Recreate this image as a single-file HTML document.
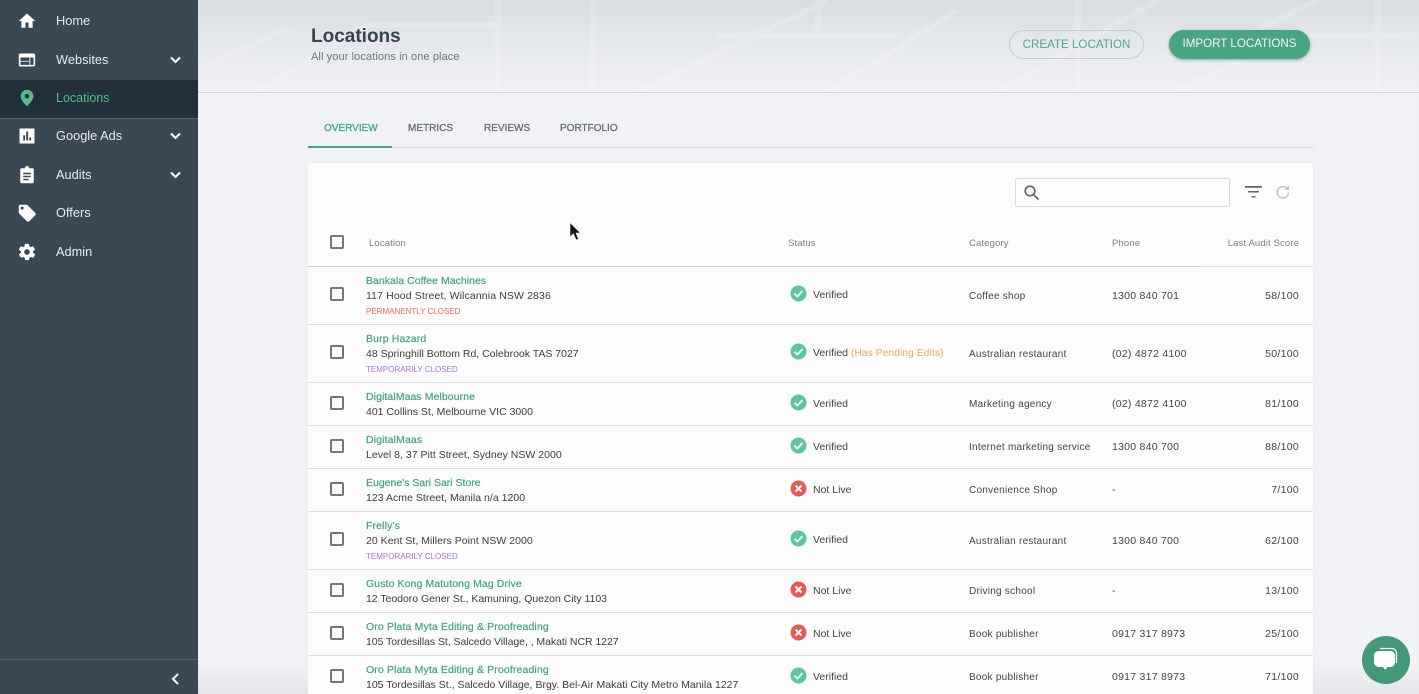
<!DOCTYPE html>
<html><head><meta charset="utf-8"><title>Locations</title>
<style>
*{box-sizing:border-box}
html,body{margin:0;padding:0;width:1419px;height:694px;overflow:hidden;font-family:"Liberation Sans",sans-serif;background:#eff1f4}
.a{position:absolute;white-space:nowrap}
#side{position:absolute;left:0;top:0;width:198px;height:694px;background:#3a4856}
.nav{position:absolute;left:56px;font-size:12.8px;color:#e6e9ec;line-height:16px}
.ic{position:absolute;left:18px;width:18px;height:18px}
.chev{position:absolute;left:170px;width:11px;height:8px}
#head{position:absolute;left:198px;top:0;width:1221px;height:93px;background:linear-gradient(#d9dee3,#eff1f4);border-bottom:1px solid #ced3d8}
#card{position:absolute;left:308px;top:163px;width:1005px;height:531px;background:#fcfcfd;border-radius:3px 3px 0 0;box-shadow:0 0 2px rgba(0,0,0,.04)}
.ln{position:absolute;left:308px;width:1005px;height:1px;background:#dcdee3}
.cb{position:absolute;left:330px;width:14px;height:14px;border:2px solid #757575;border-radius:2px}
.n{position:absolute;left:366px;margin-top:1px;font-size:10.5px;color:#41a47c;line-height:13px;white-space:nowrap;letter-spacing:.13px;-webkit-text-stroke:.2px #41a47c}
.d{position:absolute;left:366px;margin-top:1px;font-size:10.5px;color:#3d3d3d;line-height:13px;white-space:nowrap;letter-spacing:0}
.t{position:absolute;left:366px;margin-top:1px;font-size:8px;line-height:10px;white-space:nowrap}
.s{position:absolute;left:813px;margin-top:1px;font-size:10.500px;color:#444;line-height:13px;white-space:nowrap}
.c{position:absolute;left:969px;margin-top:1px;font-size:10px;color:#444;line-height:13px;white-space:nowrap;letter-spacing:.25px}
.p{position:absolute;left:1112px;margin-top:1px;font-size:10.5px;color:#444;line-height:13px;white-space:nowrap;letter-spacing:.25px}
.r{position:absolute;right:120px;margin-top:1px;font-size:10.5px;color:#444;line-height:13px;white-space:nowrap;letter-spacing:.3px}
.h{position:absolute;top:237px;margin-top:1px;font-size:9.5px;color:#808080;line-height:12px;white-space:nowrap;letter-spacing:.13px}
.st{position:absolute;left:789.5px;width:17px;height:17px}
.tab{position:absolute;top:122px;margin-top:1px;font-size:10px;line-height:12px;color:#666d74;-webkit-text-stroke:.3px #666d74}
</style></head><body>
<svg class="a" style="left:198px;top:0;width:1221px;height:694px" viewBox="0 0 1221 694">
<defs><pattern id="dots" width="4" height="4" patternUnits="userSpaceOnUse"><rect x="1" y="1" width="1" height="1" fill="#fff" opacity=".6"/><rect x="3" y="3" width="1" height="1" fill="#fff" opacity=".45"/></pattern>
<linearGradient id="fade" x1="0" y1="0" x2="0" y2="1"><stop offset="0" stop-color="#e3e5e8" stop-opacity="0"/><stop offset="1" stop-color="#e3e5e8"/></linearGradient></defs>
<rect width="1221" height="694" fill="#eff1f4"/><rect y="93" width="1221" height="601" fill="url(#dots)"/>
<rect y="664" width="1221" height="30" fill="url(#fade)"/>
</svg>
<div id="head">
<svg width="1221" height="92" viewBox="0 0 1221 92" fill="none">
<g stroke="#fff" stroke-opacity=".16" stroke-width="6">
<path d="M0 70 L90 28M60 92L170 25 300 25 M300 0V92M395 0V92 M440 92 L630 0M520 35H700M630 92L760 10M800 92 960 0M620 0V35M880 0V92M980 92 1100 30 M1120 0 L1000 60M1180 0V92M1040 35H1221"/>
</g>
<rect y="28" width="1221" height="64" fill="url(#dots)" opacity=".5"/>
</svg></div>
<div id="side">
<div class="a" style="left:0;top:80px;width:198px;height:38px;background:#22303c"></div>
<div class="a" style="left:0;top:118px;width:198px;height:1px;background:#566472"></div>
<div class="a" style="left:0;top:659px;width:198px;height:1px;background:#566472"></div>
<svg class="ic" style="top:12px" viewBox="0 0 24 24" fill="#fff"><path d="M10 21v-7h4v7h5.500v-9H23L12 2 1 12h3.500v9z"/></svg>
<div class="nav" style="top:13px">Home</div>
<svg class="ic" style="top:51px" viewBox="1 1 22 22" fill="#fff"><path d="M20 4H4c-1.100 0-2 .9-2 2v12c0 1.100.9 2 2 2h16c1.100 0 2-.9 2-2V6c0-1.100-.9-2-2-2zm-5 14H4v-4h11v4zm0-5H4V9h11v4zm5 5h-4V9h4v9z"/></svg>
<div class="nav" style="top:52px">Websites</div>
<svg class="chev" style="top:56px" viewBox="0 0 11 8" fill="none" stroke="#fff" stroke-width="2"><path d="M1 1.500l4.500 4.500L10 1.500"/></svg>
<svg class="ic" style="top:89px" viewBox="0 0 24 24" fill="#53bd92"><path d="M12 1a8.500 8.500 0 0 0-8.500 8.500C3.500 15.500 12 23 12 23s8.500-7.500 8.500-13.500A8.500 8.500 0 0 0 12 1zm0 11.500a3 3 0 1 1 0-6 3 3 0 0 1 0 6z"/></svg>
<div class="nav" style="top:90px;color:#53bd92;font-size:12.500px">Locations</div>
<svg class="ic" style="top:127px" viewBox="0 0 24 24" fill="#fff"><path fill-rule="evenodd" d="M3 2h18a1 1 0 0 1 1 1v18a1 1 0 0 1-1 1H3a1 1 0 0 1-1-1V3a1 1 0 0 1 1-1zm4 9v7h2.500v-7zm4-5v12h2.500V6zm4 8v4h2.500v-4z"/></svg>
<div class="nav" style="top:128px">Google Ads</div>
<svg class="chev" style="top:132px" viewBox="0 0 11 8" fill="none" stroke="#fff" stroke-width="2"><path d="M1 1.500l4.500 4.500L10 1.500"/></svg>
<svg class="ic" style="top:166px" viewBox="0 0 24 24" fill="#fff"><path fill-rule="evenodd" d="M5 3h4a3 3 0 0 1 6 0h4a2 2 0 0 1 2 2v16a2 2 0 0 1-2 2H5a2 2 0 0 1-2-2V5a2 2 0 0 1 2-2zm2 6v2h10V9zm0 4v2h10v-2zm0 4v2h7v-2z"/></svg>
<div class="nav" style="top:167px">Audits</div>
<svg class="chev" style="top:171px" viewBox="0 0 11 8" fill="none" stroke="#fff" stroke-width="2"><path d="M1 1.500l4.500 4.500L10 1.500"/></svg>
<svg class="ic" style="top:204px" viewBox="0 0 24 24" fill="#fff"><path fill-rule="evenodd" d="M1 3.500A2.500 2.500 0 0 1 3.500 1h7.500a2.500 2.500 0 0 1 1.800.7l10 10a2.500 2.500 0 0 1 0 3.500l-7.600 7.600a2.500 2.500 0 0 1-3.500 0l-10-10A2.500 2.500 0 0 1 1 11zM5.500 7.500a2 2 0 1 0 0-4 2 2 0 0 0 0 4z"/></svg>
<div class="nav" style="top:205px">Offers</div>
<svg class="ic" style="top:243px" viewBox="1 1 22 22" fill="#fff"><path fill-rule="evenodd" d="M19.400 13a7.500 7.500 0 0 0 0-2l2.100-1.600a.5.5 0 0 0 .1-.6l-2-3.500a.5.5 0 0 0-.6-.2l-2.500 1a7.300 7.300 0 0 0-1.700-1l-.4-2.600a.5.5 0 0 0-.5-.4h-4a.5.5 0 0 0-.5.4l-.4 2.600a7.300 7.300 0 0 0-1.700 1l-2.500-1a.5.5 0 0 0-.6.2l-2 3.500a.5.5 0 0 0 .1.600L4.600 11a7.500 7.500 0 0 0 0 2l-2.100 1.600a.5.5 0 0 0-.1.600l2 3.500a.5.5 0 0 0 .6.2l2.500-1c.5.4 1.100.7 1.700 1l.4 2.600a.5.5 0 0 0 .5.4h4a.5.5 0 0 0 .5-.4l.4-2.600c.6-.3 1.200-.6 1.700-1l2.500 1a.5.5 0 0 0 .6-.2l2-3.500a.5.5 0 0 0-.1-.6zM12 15.500a3.500 3.500 0 1 1 0-7 3.500 3.500 0 0 1 0 7z"/></svg>
<div class="nav" style="top:244px">Admin</div>
<svg class="chev" style="top:673px;left:171px;width:9px;height:12px" viewBox="0 0 9 12" fill="none" stroke="#fff" stroke-width="2"><path d="M7 1L2 6l5 5"/></svg>
</div>

<div class="a" style="left:311px;top:25px;font-size:19px;font-weight:700;color:#36454f;line-height:24px">Locations</div>
<div class="a" style="left:311px;top:51px;font-size:11px;color:#6b7580;line-height:13px;letter-spacing:.1px">All your locations in one place</div>
<div class="a" style="left:1009px;top:30px;width:135px;height:29px;border:1px solid #c5cbd0;border-radius:15px;color:#4eab85;font-size:11.600px;line-height:27px;text-align:center">CREATE LOCATION</div>
<div class="a" style="left:1169px;top:30px;width:141px;height:29px;background:#48a582;border-radius:15px;color:#f1f7f5;font-size:11.600px;line-height:28px;text-align:center;box-shadow:0 1px 3px rgba(0,0,0,.3)">IMPORT LOCATIONS</div>

<div class="tab" style="left:324px;color:#41a87f;-webkit-text-stroke:.3px #41a87f">OVERVIEW</div>
<div class="tab" style="left:408px">METRICS</div>
<div class="tab" style="left:484px">REVIEWS</div>
<div class="tab" style="left:560px">PORTFOLIO</div>
<div class="a" style="left:308px;top:147px;width:1005px;height:1px;background:#d3d7db"></div>
<div class="a" style="left:308px;top:146px;width:84px;height:2px;background:#41a87f"></div>

<div id="card"></div>
<div class="a" style="left:1015px;top:178px;width:215px;height:29px;border:1px solid #dadce1;border-radius:2px;background:#fcfcfd"></div>
<svg class="a" style="left:1023px;top:184px;width:17px;height:17px" viewBox="0 0 17 17" fill="none" stroke="#666" stroke-width="1.700"><circle cx="7" cy="7" r="4.800"/><path d="M10.500 10.500L15.500 15.500"/></svg>
<svg class="a" style="left:1245px;top:186px;width:18px;height:13px" viewBox="0 0 18 13" fill="#666"><rect width="17" height="1.800" y="0"/><rect x="3" width="11" height="1.500" y="5"/><rect x="6.500" width="4" height="1.500" y="10"/></svg>
<svg class="a" style="left:1275px;top:184px;width:16px;height:16px" viewBox="0 0 16 16" fill="none" stroke="#c4c4c4" stroke-width="1.500"><path d="M13.500 8.500a5.700 5.700 0 1 1-1.700-4.300"/><path d="M14 1.500v4.500h-4.500z" fill="#c4c4c4" stroke="none"/></svg>

<div class="cb" style="top:235px"></div>
<div class="h" style="left:369px">Location</div><div class="h" style="left:788px">Status</div><div class="h" style="left:969px">Category</div><div class="h" style="left:1112px">Phone</div><div class="h" style="right:120px">Last Audit Score</div>
<div class="ln" style="top:266px;background:#cfd0d2;width:891px"></div><div class="ln" style="top:266px;left:1199px;width:114px"></div>

<svg width="0" height="0" style="position:absolute"><defs>
<symbol id="ok" viewBox="0 0 17 17"><circle cx="8.500" cy="8.500" r="8" fill="#5cc79c"/><path d="M4.500 8.800l2.800 2.800 5.200-5.600" fill="none" stroke="#fff" stroke-width="1.800"/></symbol>
<symbol id="no" viewBox="0 0 17 17"><circle cx="8.500" cy="8.500" r="8" fill="#ec5655"/><path d="M5.500 5.500l6 6M11.500 5.500l-6 6" fill="none" stroke="#fff" stroke-width="2"/></symbol>
</defs></svg>

<div class="cb" style="top:287px"></div>
<div class="n" style="top:274px;letter-spacing:.03px">Bankala Coffee Machines</div><div class="d" style="top:289px;letter-spacing:.12px">117 Hood Street, Wilcannia NSW 2836</div><div class="t" style="top:306px;color:#ee6a62">PERMANENTLY CLOSED</div>
<svg class="st" style="top:285px"><use href="#ok"/></svg><div class="s" style="top:288px">Verified</div><div class="c" style="top:289px">Coffee shop</div><div class="p" style="top:289px">1300 840 701</div><div class="r" style="top:289px">58/100</div>
<div class="ln" style="top:324px"></div>

<div class="cb" style="top:345px"></div>
<div class="n" style="top:332px">Burp Hazard</div><div class="d" style="top:347px">48 Springhill Bottom Rd, Colebrook TAS 7027</div><div class="t" style="top:364px;color:#a576df">TEMPORARILY CLOSED</div>
<svg class="st" style="top:343px"><use href="#ok"/></svg><div class="s" style="top:346px">Verified <span style="color:#f6a455;font-size:10px;letter-spacing:.2px">(Has Pending Edits)</span></div><div class="c" style="top:347px">Australian restaurant</div><div class="p" style="top:347px">(02) 4872 4100</div><div class="r" style="top:347px">50/100</div>
<div class="ln" style="top:382px"></div>

<div class="cb" style="top:396px"></div>
<div class="n" style="top:390px;letter-spacing:.08px">DigitalMaas Melbourne</div><div class="d" style="top:405px">401 Collins St, Melbourne VIC 3000</div>
<svg class="st" style="top:394px"><use href="#ok"/></svg><div class="s" style="top:397px">Verified</div><div class="c" style="top:397px">Marketing agency</div><div class="p" style="top:397px">(02) 4872 4100</div><div class="r" style="top:397px">81/100</div>
<div class="ln" style="top:425px"></div>

<div class="cb" style="top:439px"></div>
<div class="n" style="top:433px">DigitalMaas</div><div class="d" style="top:448px;letter-spacing:.02px">Level 8, 37 Pitt Street, Sydney NSW 2000</div>
<svg class="st" style="top:437px"><use href="#ok"/></svg><div class="s" style="top:440px">Verified</div><div class="c" style="top:440px">Internet marketing service</div><div class="p" style="top:440px">1300 840 700</div><div class="r" style="top:440px">88/100</div>
<div class="ln" style="top:468px"></div>

<div class="cb" style="top:482px"></div>
<div class="n" style="top:476px;letter-spacing:0">Eugene's Sari Sari Store</div><div class="d" style="top:491px;letter-spacing:.03px">123 Acme Street, Manila n/a 1200</div>
<svg class="st" style="top:480px"><use href="#no"/></svg><div class="s" style="top:483px">Not Live</div><div class="c" style="top:483px">Convenience Shop</div><div class="p" style="top:483px">-</div><div class="r" style="top:483px">7/100</div>
<div class="ln" style="top:511px"></div>

<div class="cb" style="top:532px"></div>
<div class="n" style="top:519px">Frelly's</div><div class="d" style="top:534px;letter-spacing:.03px">20 Kent St, Millers Point NSW 2000</div><div class="t" style="top:551px;color:#a576df">TEMPORARILY CLOSED</div>
<svg class="st" style="top:530px"><use href="#ok"/></svg><div class="s" style="top:533px">Verified</div><div class="c" style="top:534px">Australian restaurant</div><div class="p" style="top:534px">1300 840 700</div><div class="r" style="top:534px">62/100</div>
<div class="ln" style="top:569px"></div>

<div class="cb" style="top:583px"></div>
<div class="n" style="top:577px;letter-spacing:.1px">Gusto Kong Matutong Mag Drive</div><div class="d" style="top:592px;letter-spacing:-.03px">12 Teodoro Gener St., Kamuning, Quezon City 1103</div>
<svg class="st" style="top:581px"><use href="#no"/></svg><div class="s" style="top:584px">Not Live</div><div class="c" style="top:584px">Driving school</div><div class="p" style="top:584px">-</div><div class="r" style="top:584px">13/100</div>
<div class="ln" style="top:612px"></div>

<div class="cb" style="top:626px"></div>
<div class="n" style="top:620px">Oro Plata Myta Editing &amp; Proofreading</div><div class="d" style="top:635px;letter-spacing:-.05px">105 Tordesillas St, Salcedo Village, , Makati NCR 1227</div>
<svg class="st" style="top:624px"><use href="#no"/></svg><div class="s" style="top:627px">Not Live</div><div class="c" style="top:627px">Book publisher</div><div class="p" style="top:627px">0917 317 8973</div><div class="r" style="top:627px">25/100</div>
<div class="ln" style="top:655px"></div>

<div class="cb" style="top:669px"></div>
<div class="n" style="top:663px">Oro Plata Myta Editing &amp; Proofreading</div><div class="d" style="top:678px">105 Tordesillas St., Salcedo Village, Brgy. Bel-Air Makati City Metro Manila 1227</div>
<svg class="st" style="top:667px"><use href="#ok"/></svg><div class="s" style="top:670px">Verified</div><div class="c" style="top:670px">Book publisher</div><div class="p" style="top:670px">0917 317 8973</div><div class="r" style="top:670px">71/100</div>

<svg class="a" style="left:569px;top:222px;width:12px;height:19px" viewBox="0 0 12 19"><path d="M1 0.500V15l3.500-3.200L7 18l2.500-1-2.500-6h4.500z" fill="#111" stroke="#fff" stroke-width=".6"/></svg>

<div class="a" style="left:1362px;top:636px;width:48px;height:48px;border-radius:50%;background:#429877"></div>
<svg class="a" style="left:1372px;top:646px;width:28px;height:28px" viewBox="0 0 28 28"><path d="M8 2.500h12a4.500 4.500 0 0 1 4.500 4.500v10" fill="none" stroke="#fff" stroke-width="1.300"/><path d="M6.500 5h12a4.500 4.500 0 0 1 4.500 4.500v7a4.500 4.500 0 0 1-4.500 4.500h-3l-2.300 3-2.300-3H6.500A4.500 4.500 0 0 1 2 16.500v-7A4.500 4.500 0 0 1 6.500 5z" fill="#fff"/></svg>
</body></html>
